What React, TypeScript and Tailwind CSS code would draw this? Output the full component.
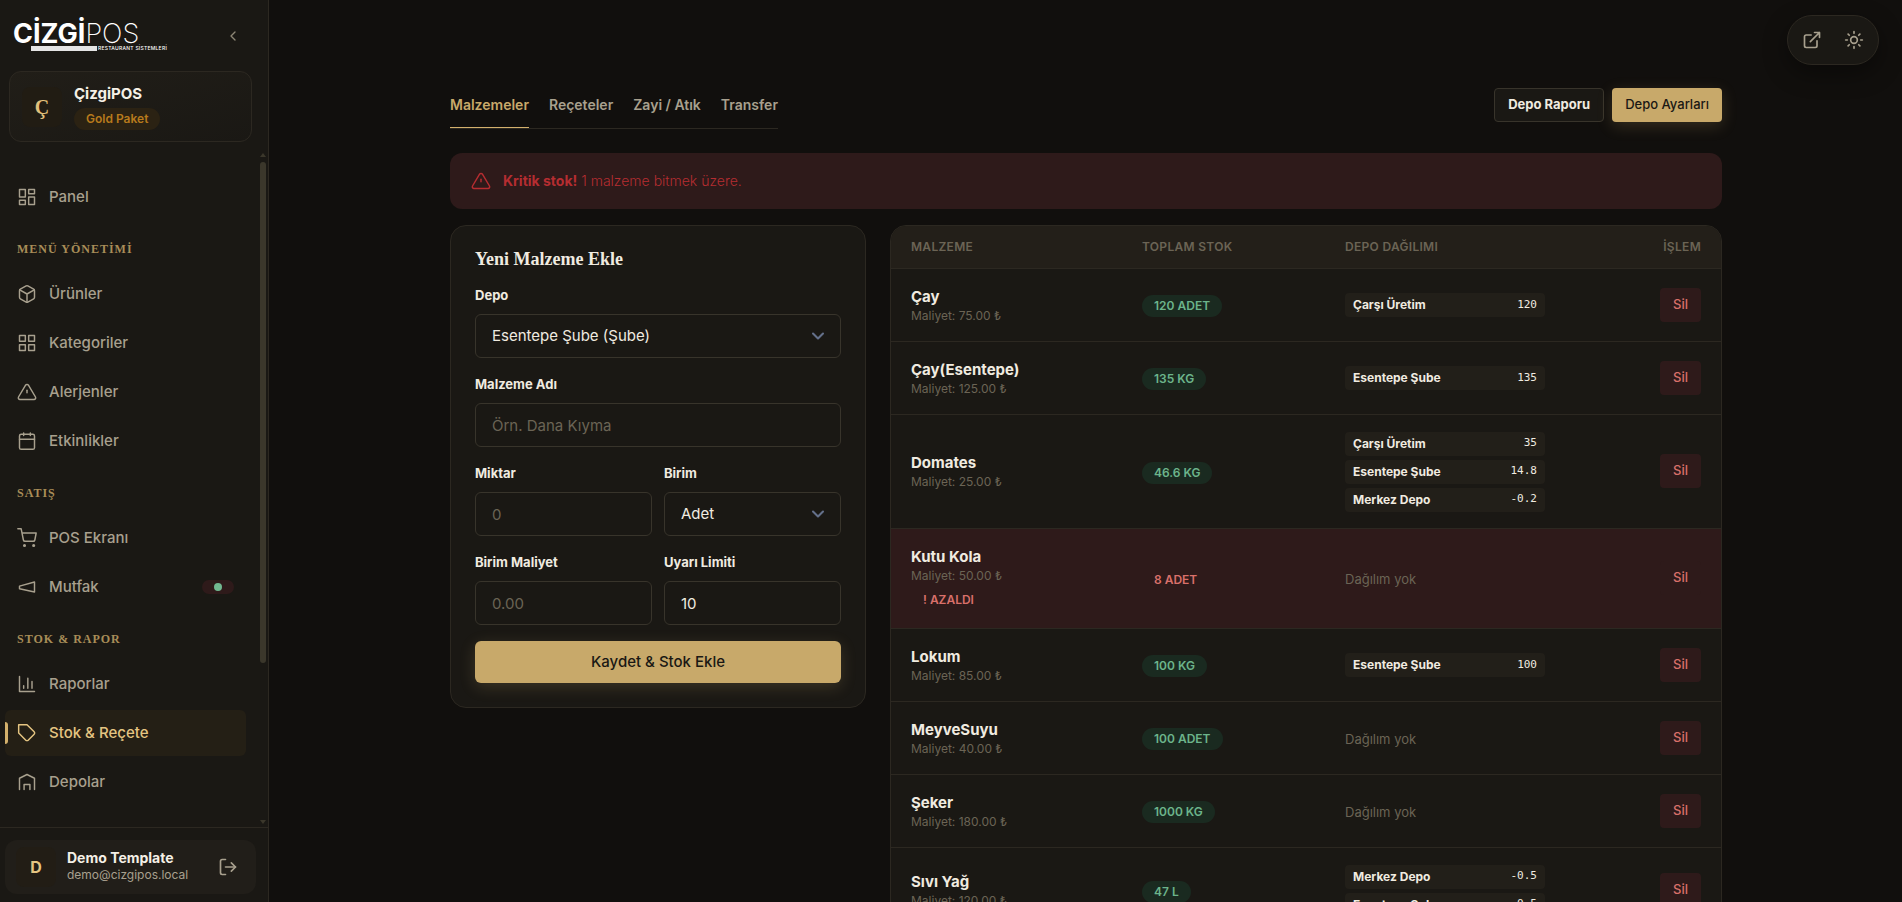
import { useState } from "react";
import type { ReactNode } from "react";
import { ChevronDown, ChevronLeft, LogOut, Sun } from "lucide-react";

type IconName =
  | "panel"
  | "box"
  | "grid"
  | "alert"
  | "calendar"
  | "cart"
  | "horn"
  | "chart"
  | "tag"
  | "depot"
  | "external";

const shapes: Record<IconName, ReactNode> = {
  panel: (
    <>
      <rect x="3" y="3" width="7" height="9" />
      <rect x="14" y="3" width="7" height="5" />
      <rect x="14" y="12" width="7" height="9" />
      <rect x="3" y="16" width="7" height="5" />
    </>
  ),
  box: (
    <>
      <path d="M21 16V8a2 2 0 0 0-1-1.73l-7-4a2 2 0 0 0-2 0l-7 4A2 2 0 0 0 3 8v8a2 2 0 0 0 1 1.73l7 4a2 2 0 0 0 2 0l7-4A2 2 0 0 0 21 16z" />
      <path d="M3.3 7 12 12l8.7-5M12 22V12" />
    </>
  ),
  grid: (
    <>
      <rect x="3" y="3" width="7" height="7" />
      <rect x="14" y="3" width="7" height="7" />
      <rect x="14" y="14" width="7" height="7" />
      <rect x="3" y="14" width="7" height="7" />
    </>
  ),
  alert: (
    <>
      <path d="M10.29 3.86 1.82 18a2 2 0 0 0 1.71 3h16.94a2 2 0 0 0 1.71-3L13.71 3.86a2 2 0 0 0-3.42 0z" />
      <path d="M12 10v3" />
    </>
  ),
  calendar: (
    <>
      <rect x="3" y="4" width="18" height="18" rx="2" />
      <path d="M8 2.5v3M16 2.5v3M3 10h18" />
    </>
  ),
  cart: (
    <>
      <circle cx="9" cy="21" r="1" />
      <circle cx="20" cy="21" r="1" />
      <path d="M1 1h4l2.68 13.39a2 2 0 0 0 2 1.61h9.72a2 2 0 0 0 2-1.61L23 6H6" />
    </>
  ),
  horn: <path d="m3 11 18-5v12L3 14v-3z" />,
  chart: <path d="M3 3v18h18M18 17V9M13 17V5M8 17v-3" />,
  tag: (
    <path d="m20.59 13.41-7.17 7.17a2 2 0 0 1-2.83 0L2 12V2h10l8.59 8.59a2 2 0 0 1 0 2.82z" />
  ),
  depot: <path d="M3 21V7.5L12 3l9 4.5V21M8.5 21v-6h7v6" />,
  external: (
    <path d="M18 13v6a2 2 0 0 1-2 2H5a2 2 0 0 1-2-2V8a2 2 0 0 1 2-2h6M15 3h6v6M10 14 21 3" />
  ),
};

function Icon({ name, stroke = 1.75 }: { name: IconName; stroke?: number }) {
  return (
    <svg
      viewBox="0 0 24 24"
      className="size-5 shrink-0"
      fill="none"
      stroke="currentColor"
      strokeWidth={stroke}
      strokeLinecap="round"
      strokeLinejoin="round"
      aria-hidden="true"
    >
      {shapes[name]}
    </svg>
  );
}

type NavItem = { label: string; icon: IconName; active?: boolean; live?: boolean };

const nav: { title?: string; items: NavItem[] }[] = [
  { items: [{ label: "Panel", icon: "panel" }] },
  {
    title: "MENÜ YÖNETİMİ",
    items: [
      { label: "Ürünler", icon: "box" },
      { label: "Kategoriler", icon: "grid" },
      { label: "Alerjenler", icon: "alert" },
      { label: "Etkinlikler", icon: "calendar" },
    ],
  },
  {
    title: "SATIŞ",
    items: [
      { label: "POS Ekranı", icon: "cart" },
      { label: "Mutfak", icon: "horn", live: true },
    ],
  },
  {
    title: "STOK & RAPOR",
    items: [
      { label: "Raporlar", icon: "chart" },
      { label: "Stok & Reçete", icon: "tag", active: true },
      { label: "Depolar", icon: "depot" },
    ],
  },
];

type Material = {
  name: string;
  cost: string;
  stock: string;
  low?: boolean;
  depots: [string, string][];
};

const materials: Material[] = [
  { name: "Çay", cost: "75.00", stock: "120 ADET", depots: [["Çarşı Üretim", "120"]] },
  { name: "Çay(Esentepe)", cost: "125.00", stock: "135 KG", depots: [["Esentepe Şube", "135"]] },
  {
    name: "Domates",
    cost: "25.00",
    stock: "46.6 KG",
    depots: [
      ["Çarşı Üretim", "35"],
      ["Esentepe Şube", "14.8"],
      ["Merkez Depo", "-0.2"],
    ],
  },
  { name: "Kutu Kola", cost: "50.00", stock: "8 ADET", low: true, depots: [] },
  { name: "Lokum", cost: "85.00", stock: "100 KG", depots: [["Esentepe Şube", "100"]] },
  { name: "MeyveSuyu", cost: "40.00", stock: "100 ADET", depots: [] },
  { name: "Şeker", cost: "180.00", stock: "1000 KG", depots: [] },
  {
    name: "Sıvı Yağ",
    cost: "120.00",
    stock: "47 L",
    depots: [
      ["Merkez Depo", "-0.5"],
      ["Esentepe Şube", "-0.5"],
    ],
  },
];

function Logo() {
  return (
    <a href="#" className="flex flex-col text-white">
      <span className="flex h-[26px] items-center text-[27px] leading-none">
        <span className="font-bold">CİZGİ</span>
        <span className="font-extralight">POS</span>
      </span>
      <span className="flex items-center gap-px pl-[18px]">
        <span className="h-[5px] w-[66px] bg-[#e4e4e4]" />
        <span className="text-[5px] leading-[5px] font-medium tracking-wider">
          RESTAURANT SİSTEMLERİ
        </span>
      </span>
    </a>
  );
}

function NavLink({ item }: { item: NavItem }) {
  return (
    <a
      href="#"
      className={
        item.active
          ? "flex h-[46px] items-center rounded-md bg-[#241f15] text-[#e5c582]"
          : "flex h-[46px] items-center rounded-md text-[#a8a08e]"
      }
    >
      <span
        className={
          item.active ? "h-[22px] w-[3px] rounded-r-sm bg-[#d3b06c]" : "h-[22px] w-[3px]"
        }
      />
      <span className="flex flex-1 items-center gap-3 pr-3 pl-[9px]">
        <Icon name={item.icon} />
        <span className="flex-1 text-[15px] font-medium">{item.label}</span>
        {item.live && (
          <span className="flex h-[14px] w-8 items-center justify-center rounded-full bg-[#2e1a1a]">
            <span className="size-2 rounded-full bg-[#72b890]" />
          </span>
        )}
      </span>
    </a>
  );
}

function Sidebar() {
  return (
    <aside className="flex w-[269px] shrink-0 flex-col border-r border-[#2c2821] bg-[#1a1814]">
      <div className="flex h-[71px] items-center justify-between pr-[27px] pl-[13px]">
        <Logo />
        <button type="button" aria-label="Menüyü daralt" className="text-[#8d8675]">
          <ChevronLeft className="size-4" />
        </button>
      </div>

      <div className="mr-4 ml-[9px] flex h-[71px] items-center gap-3 rounded-xl border border-[#2c2821] bg-gradient-to-br from-[#211e18] to-[#1a1814] pl-3">
        <span className="flex size-10 items-center justify-center rounded-lg bg-[#211c13] font-[Liberation_Serif,serif] text-xl font-bold text-[#e0c07c]">
          Ç
        </span>
        <div className="flex flex-col items-start gap-1">
          <span className="text-[15px] leading-5 font-bold text-[#f5f0e6]">ÇizgiPOS</span>
          <span className="rounded-full bg-[#2b2213] px-3 text-xs leading-[22px] font-semibold text-[#b77a1c]">
            Gold Paket
          </span>
        </div>
      </div>

      <div className="flex min-h-0 flex-1 pt-2">
        <nav className="flex flex-1 flex-col gap-[3px] overflow-hidden pt-6 pr-[14px] pl-[5px]">
          {nav.map((group) => (
            <div key={group.items[0].label} className="flex flex-col gap-[3px]">
              {group.title && (
                <h3 className="flex h-[45px] items-center pt-1.5 pl-3 font-[Liberation_Serif,serif] text-xs font-bold tracking-[1px] text-[#a88d58]">
                  {group.title}
                </h3>
              )}
              {group.items.map((item) => (
                <NavLink key={item.label} item={item} />
              ))}
            </div>
          ))}
        </nav>
        <div className="flex w-2 flex-col items-center pr-0.5" aria-hidden="true">
          <span className="mt-[3px] border-x-[3px] border-b-4 border-x-transparent border-b-[#3b372b]" />
          <span className="mt-[5px] h-[74%] w-[6px] rounded-full bg-[#3b372b]" />
          <span className="mt-auto mb-[3px] border-x-[3px] border-t-4 border-x-transparent border-t-[#3b372b]" />
        </div>
      </div>

      <div className="border-t border-[#2c2821] pt-3 pr-3 pb-2 pl-[5px]">
        <div className="flex h-[54px] items-center rounded-xl bg-[#211e19] pr-[18px] pl-[11px]">
          <span className="flex size-10 items-center justify-center rounded-lg bg-[#221d15] text-base font-bold text-[#e5c582]">
            D
          </span>
          <div className="ml-[11px] flex flex-1 flex-col pb-0.5">
            <span className="text-sm leading-[18px] font-bold text-[#f5f0e6]">
              Demo Template
            </span>
            <span className="text-xs leading-4 text-[#a8a08e]">demo@cizgipos.local</span>
          </div>
          <button type="button" aria-label="Çıkış" className="text-[#a8a08e]">
            <LogOut className="size-5" />
          </button>
        </div>
      </div>
    </aside>
  );
}

const field =
  "h-11 w-full rounded-md border border-[#38342b] bg-[#1a1814] px-4 text-[15px] text-[#f0ebe0] placeholder:text-[#6b6455] outline-none focus:border-[#c8a96a]";

function Field({ id, label, children }: { id: string; label: string; children: ReactNode }) {
  return (
    <div className="flex min-w-0 flex-col gap-[9px]">
      <label htmlFor={id} className="text-[13px] leading-5 font-bold text-[#f0ebe0]">
        {label}
      </label>
      {children}
    </div>
  );
}

function Select({ id, options }: { id: string; options: string[] }) {
  return (
    <div className="grid items-center">
      <select id={id} className={`${field} col-start-1 row-start-1 appearance-none`}>
        {options.map((o) => (
          <option key={o}>{o}</option>
        ))}
      </select>
      <ChevronDown
        strokeWidth={2.5}
        className="pointer-events-none col-start-1 row-start-1 mr-[13px] size-5 justify-self-end text-[#64708a]"
      />
    </div>
  );
}

function MaterialForm() {
  const [limit, setLimit] = useState("10");

  return (
    <form
      onSubmit={(e) => e.preventDefault()}
      className="flex flex-col gap-4 rounded-2xl border border-[#2c2821] bg-[#1a1814] p-6"
    >
      <h2 className="font-[Liberation_Serif,serif] text-lg leading-[19px] font-bold text-[#f0ebe0]">
        Yeni Malzeme Ekle
      </h2>
      <Field id="depo" label="Depo">
        <Select id="depo" options={["Esentepe Şube (Şube)", "Merkez Depo", "Çarşı Üretim"]} />
      </Field>
      <Field id="ad" label="Malzeme Adı">
        <input id="ad" type="text" placeholder="Örn. Dana Kıyma" className={field} />
      </Field>
      <div className="grid grid-cols-2 gap-x-3 gap-y-4">
        <Field id="miktar" label="Miktar">
          <input id="miktar" type="text" inputMode="decimal" placeholder="0" className={field} />
        </Field>
        <Field id="birim" label="Birim">
          <Select id="birim" options={["Adet", "KG", "L"]} />
        </Field>
        <Field id="maliyet" label="Birim Maliyet">
          <input id="maliyet" type="text" inputMode="decimal" placeholder="0.00" className={field} />
        </Field>
        <Field id="limit" label="Uyarı Limiti">
          <input
            id="limit"
            type="text"
            inputMode="numeric"
            value={limit}
            onChange={(e) => setLimit(e.target.value)}
            className={field}
          />
        </Field>
      </div>
      <button
        type="submit"
        className="h-[42px] rounded-md bg-[#c8a96a] text-[15px] font-medium text-[#1a1814] shadow-[0_4px_16px_rgba(200,169,106,0.2)]"
      >
        Kaydet &amp; Stok Ekle
      </button>
    </form>
  );
}

function MaterialRow({ item }: { item: Material }) {
  return (
    <tr
      className={
        item.low
          ? "h-[100px] border-t border-[#2c2821] bg-[#2e1a1a]"
          : "h-[73px] border-t border-[#2c2821]"
      }
    >
      <td className="px-5 pt-[18px] pb-4">
        <div className="text-[15px] leading-5 font-bold text-[#f0ebe0]">{item.name}</div>
        <div className="text-xs leading-[18px] text-[#6b6455]">Maliyet: {item.cost} ₺</div>
        {item.low && (
          <div className="mt-1 px-3 text-xs leading-[22px] font-semibold text-[#d9706a]">
            ! AZALDI
          </div>
        )}
      </td>
      <td className="px-5 py-4">
        <span
          className={
            item.low
              ? "inline-block rounded-full px-3 text-xs leading-[22px] font-semibold text-[#d9706a]"
              : "inline-block rounded-full bg-[#1a2a20] px-3 text-xs leading-[22px] font-semibold text-[#6cb48b]"
          }
        >
          {item.stock}
        </span>
      </td>
      <td className="px-5 py-4">
        {item.depots.length === 0 ? (
          <span className="text-[13px] text-[#6b6455]">Dağılım yok</span>
        ) : (
          <ul className="flex w-[200px] flex-col gap-1 pt-px">
            {item.depots.map(([depot, amount]) => (
              <li
                key={depot}
                className="flex h-6 items-center justify-between rounded bg-[#221f19] px-2 text-[#f0ebe0]"
              >
                <span className="text-xs font-bold">{depot}</span>
                <span className="font-[DejaVu_Sans_Mono,monospace] text-[11px]">{amount}</span>
              </li>
            ))}
          </ul>
        )}
      </td>
      <td className="px-5 py-4 text-right">
        <button
          type="button"
          className="h-[34px] rounded bg-[#2e1a1a] px-[13px] align-middle text-[13px] font-medium text-[#d9706a]"
        >
          Sil
        </button>
      </td>
    </tr>
  );
}

function MaterialTable() {
  return (
    <div className="overflow-hidden rounded-2xl border border-[#2c2821] bg-[#1a1814]">
      <table className="w-full table-fixed border-collapse">
        <thead>
          <tr className="h-[42px] bg-[#231f19] text-left text-xs tracking-wide text-[#6b6455]">
            <th className="w-[231px] px-5 font-semibold">MALZEME</th>
            <th className="w-[203px] px-5 font-semibold">TOPLAM STOK</th>
            <th className="px-5 font-semibold">DEPO DAĞILIMI</th>
            <th className="w-[110px] px-5 text-right font-semibold">İŞLEM</th>
          </tr>
        </thead>
        <tbody>
          {materials.map((m) => (
            <MaterialRow key={m.name} item={m} />
          ))}
        </tbody>
      </table>
    </div>
  );
}

const tabs = ["Malzemeler", "Reçeteler", "Zayi / Atık", "Transfer"];

export default function App() {
  const [tab, setTab] = useState(tabs[0]);

  return (
    <div className="flex h-screen overflow-hidden bg-[#110f0d] font-[Inter,sans-serif]">
      <Sidebar />

      <main className="min-w-0 flex-1 overflow-y-auto pl-px [scrollbar-width:none]">
        <div className="mx-auto flex max-w-[1320px] flex-col px-6 pt-[82px] pb-10">
          <div className="flex items-start justify-between">
            <div role="tablist" className="flex h-[47px] gap-5 border-b border-[#2c2821]">
              {tabs.map((t) => (
                <button
                  key={t}
                  type="button"
                  role="tab"
                  aria-selected={t === tab}
                  onClick={() => setTab(t)}
                  className={
                    t === tab
                      ? "border-b border-[#d3b06c] text-sm font-semibold text-[#c8a96a]"
                      : "border-b border-transparent text-sm font-semibold text-[#a8a08e]"
                  }
                >
                  {t}
                </button>
              ))}
            </div>
            <div className="flex gap-2 pt-1.5">
              <button
                type="button"
                className="h-[34px] rounded border border-[#38342b] bg-[#1a1814] px-[13px] text-[13px] font-bold text-[#f0ebe0]"
              >
                Depo Raporu
              </button>
              <button
                type="button"
                className="h-[34px] rounded bg-[#c8a96a] px-[13px] text-[13px] font-medium text-[#1a1814] shadow-[0_4px_16px_rgba(200,169,106,0.2)]"
              >
                Depo Ayarları
              </button>
            </div>
          </div>

          <div className="mt-6 flex h-14 items-center gap-3 rounded-xl bg-[#2e1a1a] px-[21px] text-[#b52d31]">
            <Icon name="alert" />
            <p className="text-sm font-light">
              <strong className="font-bold">Kritik stok!</strong> 1 malzeme bitmek üzere.
            </p>
          </div>

          <div className="mt-4 grid grid-cols-[1fr_2fr] items-start gap-6">
            <MaterialForm />
            <MaterialTable />
          </div>
        </div>
      </main>

      <div className="fixed top-[15px] right-[23px] flex h-[50px] w-[92px] items-center justify-center gap-[22px] rounded-full border border-[#2c2821] bg-[#1a1814] text-[#a8a08e] shadow-[0_8px_24px_rgba(0,0,0,0.4)]">
        <a href="#" aria-label="Siteyi aç">
          <Icon name="external" stroke={2} />
        </a>
        <button type="button" aria-label="Tema">
          <Sun className="size-5" />
        </button>
      </div>
    </div>
  );
}
